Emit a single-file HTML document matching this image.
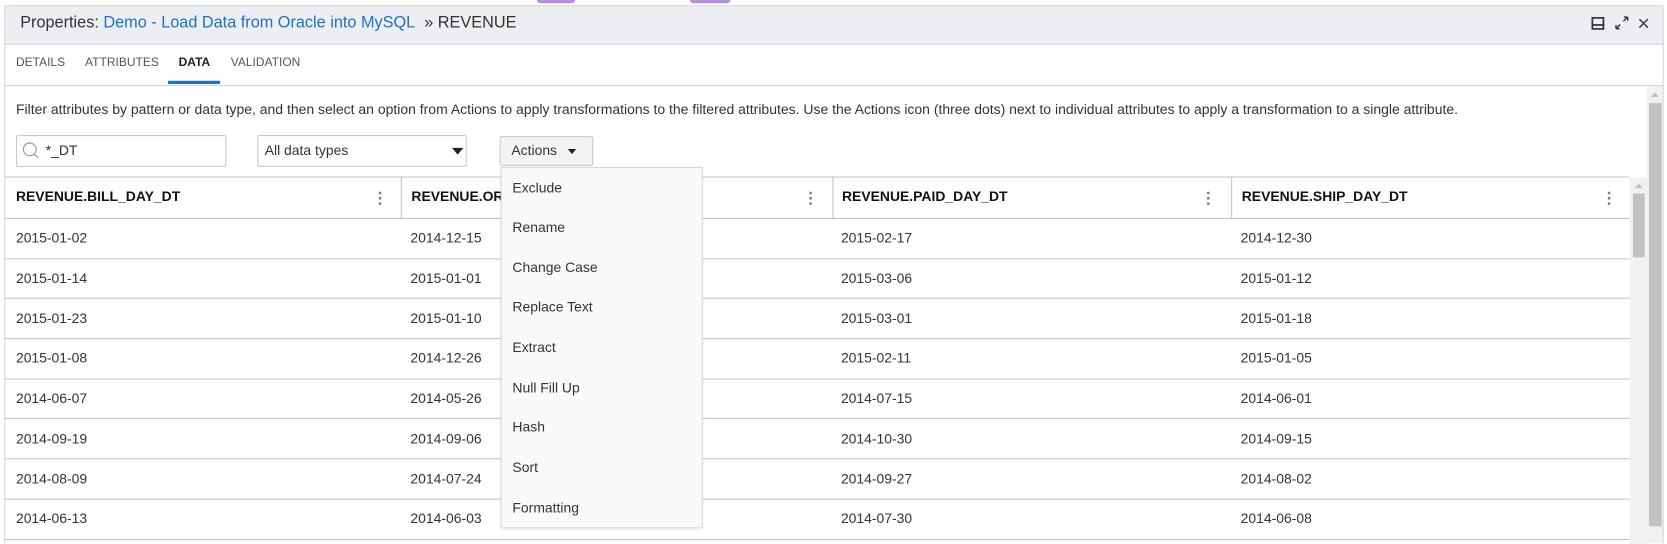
<!DOCTYPE html>
<html><head><style>
*{margin:0;padding:0;box-sizing:border-box}
body{width:1667px;height:540px;background:#fff;overflow:hidden}
#w{position:absolute;left:0;top:0;width:1568px;height:508px;transform:scale(1.06314);transform-origin:0 0;font-family:"Liberation Sans",Arial,sans-serif;color:#333}
.a{position:absolute;white-space:nowrap;line-height:20px}
.hdr{left:4px;top:5px;width:1561px;height:37px;background:#eceef1;border:1px solid #d6d8dc;border-bottom:1px solid #cfd2d6}
.tabs{left:4px;top:42px;width:1561px;height:39px;border-left:1px solid #d6d8dc;border-right:1px solid #d6d8dc;border-bottom:1px solid #cfd2d6}
.tab{top:49px;font-size:11.3px;color:#555}
.inp{border:1px solid #c8c8c8;border-radius:2px;background:#fff}
.th{font-weight:bold;font-size:13.1px;color:#111;top:175px}
.cell{font-size:13.1px;color:#333;line-height:37.75px}
.hl{left:4px;width:1529px;height:1px;background:#c4c4c8}
.dots{width:3px;height:14px;top:179px;background:radial-gradient(circle,#777 1.2px,transparent 1.4px) 0 0/3px 5px repeat-y}
.mi{left:482px;font-size:13.1px;color:#333}
</style></head><body><div id="w">
<div class="a" style="left:505px;top:0;width:36px;height:3px;background:#b98ce6;border-radius:0 0 6px 6px"></div>
<div class="a" style="left:649px;top:0;width:38px;height:3px;background:#b98ce6;border-radius:0 0 6px 6px"></div>
<div class="a hdr"></div>
<div class="a" style="left:19px;top:12px;font-size:15.3px;color:#333">Properties: <span style="color:#1a73c8">Demo - Load Data from Oracle into MySQL</span>&nbsp; » REVENUE</div>
<svg class="a" style="left:1495px;top:14px" width="60" height="16" viewBox="0 0 60 16">
<rect x="2.8" y="2.8" width="10.4" height="10.4" fill="none" stroke="#333" stroke-width="1.6"/><line x1="2" y1="9.5" x2="14" y2="9.5" stroke="#333" stroke-width="1.6"/>
<path d="M25 13 L29 9 M25 13 V9.5 M25 13 H28.5 M36 2 L32 6 M36 2 H32.5 M36 2 V5.5" stroke="#333" stroke-width="1.3" fill="none"/>
<path d="M47 4 L55 12 M55 4 L47 12" stroke="#333" stroke-width="1.3"/>
</svg>
<div class="a tabs"></div>
<div class="a tab" style="left:15px">DETAILS</div>
<div class="a tab" style="left:80px">ATTRIBUTES</div>
<div class="a tab" style="left:168px;color:#222;font-weight:bold">DATA</div>
<div class="a" style="left:158px;top:76px;width:49px;height:3px;background:#1a73c8"></div>
<div class="a tab" style="left:217px">VALIDATION</div>
<div class="a" style="left:4px;top:81px;width:1px;height:430px;background:#d6d8dc"></div>
<div class="a" style="left:15px;top:93px;font-size:13.15px">Filter attributes by pattern or data type, and then select an option from Actions to apply transformations to the filtered attributes. Use the Actions icon (three dots) next to individual attributes to apply a transformation to a single attribute.</div>
<div class="a inp" style="left:15px;top:127px;width:198px;height:30px"></div>
<svg class="a" style="left:20px;top:133px" width="18" height="18"><circle cx="8" cy="7.5" r="6" fill="none" stroke="#999" stroke-width="1.1"/><line x1="12.3" y1="11.8" x2="16" y2="15.5" stroke="#999" stroke-width="1.1"/></svg>
<div class="a" style="left:43px;top:132px;font-size:13.1px">*_DT</div>
<div class="a inp" style="left:242px;top:127px;width:197px;height:30px"></div>
<div class="a" style="left:249px;top:132px;font-size:13.1px">All data types</div>
<svg class="a" style="left:425px;top:139px" width="11" height="7"><path d="M0 0H11L5.5 6.5Z" fill="#222"/></svg>
<div class="a" style="left:470px;top:128px;width:88px;height:28px;background:#f3f3f4;border:1px solid #c8c8c8;border-radius:2px"></div>
<div class="a" style="left:481px;top:132px;font-size:13.1px">Actions</div>
<svg class="a" style="left:533px;top:140px" width="10" height="6"><path d="M1 0H9L5 5Z" fill="#222"/></svg>
<div class="a hl" style="top:166px"></div>
<div class="a hl" style="top:205px"></div>
<div class="a" style="left:377px;top:167px;width:1px;height:38px;background:#c4c4c8"></div>
<div class="a" style="left:783px;top:167px;width:1px;height:38px;background:#c4c4c8"></div>
<div class="a" style="left:1158px;top:167px;width:1px;height:38px;background:#c4c4c8"></div>
<div class="a th" style="left:15px">REVENUE.BILL_DAY_DT</div>
<div class="a th" style="left:387px">REVENUE.ORDER_DAY_DT</div>
<div class="a th" style="left:792px">REVENUE.PAID_DAY_DT</div>
<div class="a th" style="left:1168px">REVENUE.SHIP_DAY_DT</div>
<div class="a dots" style="left:356px"></div>
<div class="a dots" style="left:761px"></div>
<div class="a dots" style="left:1135px"></div>
<div class="a dots" style="left:1512px"></div>
<div class="a hl" style="top:243px"></div><div class="a hl" style="top:280px"></div><div class="a hl" style="top:318px"></div><div class="a hl" style="top:356px"></div><div class="a hl" style="top:393px"></div><div class="a hl" style="top:431px"></div><div class="a hl" style="top:469px"></div><div class="a hl" style="top:507px"></div>
<div class="a cell" style="left:15px;top:205px">2015-01-02<br>2015-01-14<br>2015-01-23<br>2015-01-08<br>2014-06-07<br>2014-09-19<br>2014-08-09<br>2014-06-13</div>
<div class="a cell" style="left:386px;top:205px">2014-12-15<br>2015-01-01<br>2015-01-10<br>2014-12-26<br>2014-05-26<br>2014-09-06<br>2014-07-24<br>2014-06-03</div>
<div class="a cell" style="left:791px;top:205px">2015-02-17<br>2015-03-06<br>2015-03-01<br>2015-02-11<br>2014-07-15<br>2014-10-30<br>2014-09-27<br>2014-07-30</div>
<div class="a cell" style="left:1167px;top:205px">2014-12-30<br>2015-01-12<br>2015-01-18<br>2015-01-05<br>2014-06-01<br>2014-09-15<br>2014-08-02<br>2014-06-08</div>
<div class="a" style="left:1533px;top:167px;width:16px;height:345px;background:#f1f1f1"></div>
<div class="a" style="left:1536px;top:182px;width:11px;height:60px;background:#c1c1c1"></div>
<svg class="a" style="left:1537px;top:172px" width="9" height="6"><path d="M1 5H8L4.5 1Z" fill="#bbb"/></svg>
<div class="a" style="left:1549px;top:81px;width:16px;height:430px;background:#f1f1f1;border-right:1px solid #d6d8dc"></div>
<div class="a" style="left:1551px;top:97px;width:12px;height:398px;background:#c1c1c1"></div>
<svg class="a" style="left:1552px;top:86px" width="9" height="6"><path d="M1 5H8L4.5 1Z" fill="#bbb"/></svg>
<div class="a" style="left:471px;top:157px;width:190px;height:340px;background:#fafafa;border:1px solid #d8d8d8;box-shadow:0 1px 3px rgba(0,0,0,.08)"></div>
<div class="a mi" style="top:167px">Exclude</div>
<div class="a mi" style="top:204px">Rename</div>
<div class="a mi" style="top:242px">Change Case</div>
<div class="a mi" style="top:279px">Replace Text</div>
<div class="a mi" style="top:317px">Extract</div>
<div class="a mi" style="top:355px">Null Fill Up</div>
<div class="a mi" style="top:392px">Hash</div>
<div class="a mi" style="top:430px">Sort</div>
<div class="a mi" style="top:468px">Formatting</div>
</div></body></html>
